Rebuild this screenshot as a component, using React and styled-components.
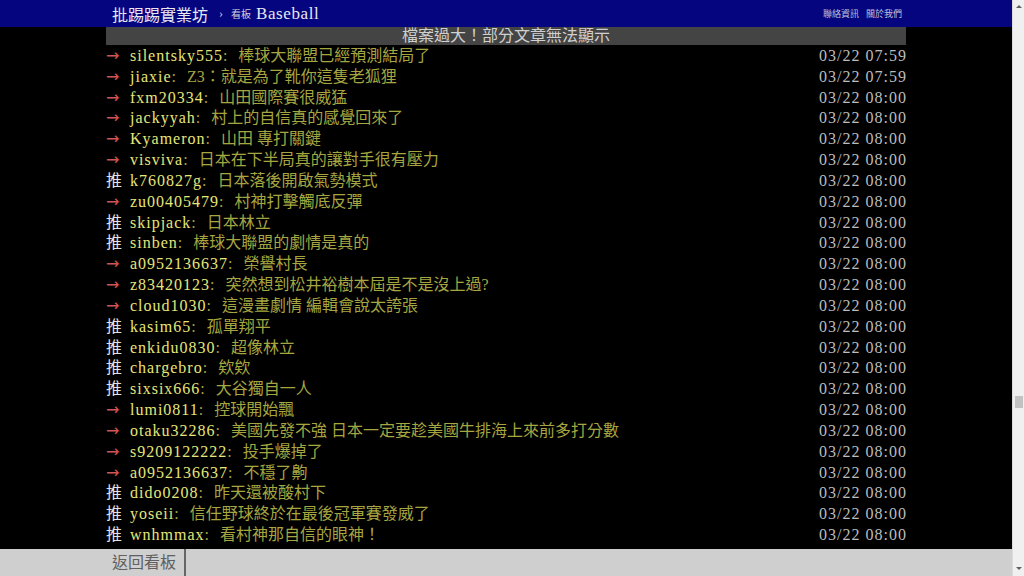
import React from "react";
import styled, { createGlobalStyle } from "styled-components";

const comments = [
  ["→", "silentsky555", "棒球大聯盟已經預測結局了", "03/22 07:59"],
  ["→", "jiaxie", "Z3：就是為了靴你這隻老狐狸", "03/22 07:59"],
  ["→", "fxm20334", "山田國際賽很威猛", "03/22 08:00"],
  ["→", "jackyyah", "村上的自信真的感覺回來了", "03/22 08:00"],
  ["→", "Kyameron", "山田 專打關鍵", "03/22 08:00"],
  ["→", "visviva", "日本在下半局真的讓對手很有壓力", "03/22 08:00"],
  ["推", "k760827g", "日本落後開啟氣勢模式", "03/22 08:00"],
  ["→", "zu00405479", "村神打擊觸底反彈", "03/22 08:00"],
  ["推", "skipjack", "日本林立", "03/22 08:00"],
  ["推", "sinben", "棒球大聯盟的劇情是真的", "03/22 08:00"],
  ["→", "a0952136637", "榮譽村長", "03/22 08:00"],
  ["→", "z83420123", "突然想到松井裕樹本屆是不是沒上過?", "03/22 08:00"],
  ["→", "cloud1030", "這漫畫劇情 編輯會說太誇張", "03/22 08:00"],
  ["推", "kasim65", "孤單翔平", "03/22 08:00"],
  ["推", "enkidu0830", "超像林立", "03/22 08:00"],
  ["推", "chargebro", "欸欸", "03/22 08:00"],
  ["推", "sixsix666", "大谷獨自一人", "03/22 08:00"],
  ["→", "lumi0811", "控球開始飄", "03/22 08:00"],
  ["→", "otaku32286", "美國先發不強 日本一定要趁美國牛排海上來前多打分數", "03/22 08:00"],
  ["→", "s9209122222", "投手爆掉了", "03/22 08:00"],
  ["→", "a0952136637", "不穩了齁", "03/22 08:00"],
  ["推", "dido0208", "昨天還被酸村下", "03/22 08:00"],
  ["推", "yoseii", "信任野球終於在最後冠軍賽發威了", "03/22 08:00"],
  ["推", "wnhmmax", "看村神那自信的眼神！", "03/22 08:00"],
];

const GlobalStyle = createGlobalStyle`
  html, body {
    margin: 0;
    padding: 0;
    background: #000;
    overflow: hidden;
  }
  body {
    font-family: "Liberation Serif", "Noto Sans CJK TC", serif;
  }
`;

const Page = styled.div`
  display: flex;
  width: 1024px;
  height: 576px;
`;

const Main = styled.div`
  flex: 1;
  display: flex;
  flex-direction: column;
  background: #000;
  min-width: 0;
`;

const TopBar = styled.div`
  height: 27px;
  flex-shrink: 0;
  background: #050580;
  display: flex;
  justify-content: center;
`;

const Inner = styled.div`
  width: 800px;
  display: flex;
  align-items: center;
`;

const SiteTitle = styled.span`
  color: #e8e8f0;
  font-size: 16px;
  margin-left: 6px;
`;

const Crumb = styled.span`
  color: #c8c8e0;
  font-size: 12px;
  margin: 0 8px 0 11px;
`;

const BoardLabel = styled.span`
  color: #d0d0e0;
  font-size: 10px;
  margin-right: 5px;
`;

const BoardName = styled.span`
  color: #e8e8f0;
  font-size: 17px;
  letter-spacing: 0.6px;
`;

const TopLinks = styled.div`
  margin-left: auto;
  margin-right: 4px;
  display: flex;
  gap: 7px;
  color: #c0c0d8;
  font-size: 9px;
`;

const Content = styled.div`
  flex: 1;
  overflow: hidden;
  display: flex;
  justify-content: center;
`;

const Column = styled.div`
  width: 800px;
`;

const Banner = styled.div`
  height: 18px;
  line-height: 18px;
  background: #444;
  color: #d0d0d0;
  font-size: 16px;
  text-align: center;
  margin-bottom: 1px;
`;

const Row = styled.div`
  display: flex;
  height: 20.83px;
  line-height: 20.83px;
  font-size: 16px;
  white-space: nowrap;
`;

const Tag = styled.span`
  flex: 0 0 24px;
  font-family: "DejaVu Sans", "Noto Sans CJK TC", sans-serif;
  color: ${(p) => (p.$push ? "#e4e4e4" : "#d25555")};
`;

const UserId = styled.span`
  color: #e6e67a;
  letter-spacing: 1px;
`;

const Colon = styled.span`
  color: #a6a640;
  margin-right: 11px;
`;

const Text = styled.span`
  color: #a6a640;
  flex: 1;
`;

const Time = styled.span`
  color: #bdbdbd;
  letter-spacing: 1px;
  margin-right: -1px;
`;

const BottomBar = styled.div`
  height: 27px;
  flex-shrink: 0;
  background: #cfcfcf;
  display: flex;
  justify-content: center;
`;

const BackButton = styled.div`
  width: 72px;
  border-right: 2px solid #666;
  color: #606060;
  font-size: 16px;
  line-height: 27px;
  padding-left: 6px;
`;

const ScrollTrack = styled.div`
  width: 11px;
  background: #f0f0f0;
  border-left: 1px solid #dcdcdc;
  display: flex;
  flex-direction: column;
  align-items: center;
`;

const Arrow = styled.div`
  width: 0;
  height: 0;
  border-left: 3px solid transparent;
  border-right: 3px solid transparent;
  ${(p) =>
    p.$down
      ? "border-top: 3px solid #606060; margin-top: auto; margin-bottom: 6px;"
      : "border-bottom: 3px solid #606060; margin-top: 5px;"}
`;

const Thumb = styled.div`
  width: 8px;
  height: 12px;
  background: #c2c2c2;
  margin-top: ${(p) => p.$offset}px;
`;

const CommentRow = ({ tag, id, text, time }) => (
  <Row>
    <Tag $push={tag === "推"}>{tag}</Tag>
    <UserId>{id}</UserId>
    <Colon>:</Colon>
    <Text>{text}</Text>
    <Time>{time}</Time>
  </Row>
);

const App = () => {
  return (
    <Page>
      <GlobalStyle />
      <Main>
        <TopBar>
          <Inner>
            <SiteTitle>批踢踢實業坊</SiteTitle>
            <Crumb>›</Crumb>
            <BoardLabel>看板</BoardLabel>
            <BoardName>Baseball</BoardName>
            <TopLinks>
              <span>聯絡資訊</span>
              <span>關於我們</span>
            </TopLinks>
          </Inner>
        </TopBar>
        <Content>
          <Column>
            <Banner>檔案過大！部分文章無法顯示</Banner>
            {comments.map(([tag, id, text, time], i) => (
              <CommentRow key={i} tag={tag} id={id} text={text} time={time} />
            ))}
          </Column>
        </Content>
        <BottomBar>
          <Inner>
            <BackButton>返回看板</BackButton>
          </Inner>
        </BottomBar>
      </Main>
      <ScrollTrack>
        <Arrow />
        <Thumb $offset={388} />
        <Arrow $down />
      </ScrollTrack>
    </Page>
  );
};

export default App;
